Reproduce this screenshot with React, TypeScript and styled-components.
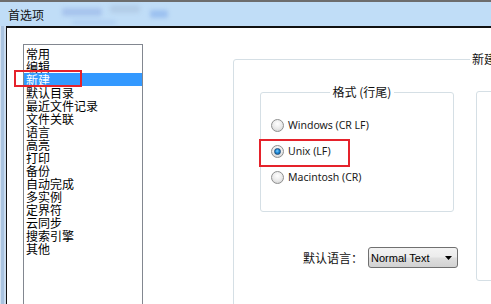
import React from 'react'
import styled, { createGlobalStyle } from 'styled-components'

const GlobalStyle = createGlobalStyle`
  html, body {
    margin: 0;
    padding: 0;
    background: #fff;
  }
  body {
    font-family: "Noto Sans CJK SC", sans-serif;
  }
`

const Window = styled.div`
  width: 491px;
  height: 304px;
  overflow: hidden;
  display: flex;
  flex-direction: column;
  background: #fff;
`

const TitleBar = styled.div`
  position: relative;
  flex: none;
  height: 24px;
  border-top: 2px solid #6d6d6d;
  background: #c0ddf7;
  display: flex;
  align-items: center;
  padding-left: 8px;
  font-size: 12px;
  color: #111;
`

// blurred glass reflections behind the caption
const Glare = styled.span<{ $x: number; $y: number; $w: number; $h: number; $c: string }>`
  position: absolute;
  left: ${({ $x }) => $x}px;
  top: ${({ $y }) => $y}px;
  width: ${({ $w }) => $w}px;
  height: ${({ $h }) => $h}px;
  background: ${({ $c }) => $c};
  filter: blur(2px);
  border-radius: 3px;
`

const Body = styled.div`
  flex: 1;
  display: flex;
  min-height: 0;
`

const FrameEdge = styled.div`
  flex: none;
  width: 6px;
  background: linear-gradient(to right, #d3e2f2 0 1px, #a9c3e0 1px 4px, #c9dcf0 4px);
`

const Client = styled.div`
  flex: 1;
  display: flex;
  align-items: flex-start;
  border-top: 2px solid #111;
  border-left: 1px solid #111;
  padding: 16px 0 0 16px;
`

const ListBox = styled.div`
  flex: none;
  width: 120px;
  height: 300px;
  box-sizing: border-box;
  border: 1px solid #828790;
  padding-top: 2px;
  background: #fff;
`

const ListItem = styled.div<{ $selected?: boolean }>`
  position: relative;
  height: 13px;
  line-height: 13px;
  font-size: 12px;
  padding-left: 2px;
  white-space: nowrap;
  color: ${({ $selected }) => ($selected ? '#fff' : '#000')};
  background: ${({ $selected }) => ($selected ? '#3399ff' : 'transparent')};
`

const Mark = styled.span<{ $l: number; $t: number; $w: number; $h: number }>`
  position: absolute;
  left: ${({ $l }) => $l}px;
  top: ${({ $t }) => $t}px;
  width: ${({ $w }) => $w}px;
  height: ${({ $h }) => $h}px;
  box-sizing: border-box;
  border: 2px solid #e5222b;
  pointer-events: none;
`

const GroupBox = styled.fieldset`
  flex: none;
  margin: 8px 0 0 90px;
  padding: 0;
  width: 320px;
  height: 300px;
  box-sizing: border-box;
  border: 1px solid #d5dfe5;
  border-radius: 3px;
  min-width: 0;
`

const Caption = styled.legend<{ $center?: boolean }>`
  font-size: 12px;
  line-height: 14px;
  padding: 0 ${({ $center }) => ($center ? 3 : 2)}px;
  margin: ${({ $center }) => ($center ? '0 auto' : '0 0 0 236px')};
  color: #111;
  white-space: nowrap;
`

const GroupInner = styled.div`
  display: flex;
  align-items: flex-start;
  padding: 19px 0 0 26px;
`

const Column = styled.div`
  display: flex;
  flex-direction: column;
`

const FormatBox = styled.fieldset`
  margin: 0;
  width: 194px;
  box-sizing: border-box;
  border: 1px solid #d5dfe5;
  border-radius: 3px;
  padding: 13px 0 21px 10px;
  min-width: 0;
`

const SideBox = styled.fieldset`
  flex: none;
  margin: 6px 0 0 22px;
  padding: 0;
  width: 100px;
  height: 190px;
  box-sizing: border-box;
  border: 1px solid #d5dfe5;
  border-radius: 3px;
`

const RadioRow = styled.div`
  position: relative;
  height: 26px;
  display: flex;
  align-items: center;
  gap: 4px;
  font-family: "Noto Sans", sans-serif;
  font-size: 10.5px;
  color: #1b1b1b;
  white-space: nowrap;
`

const Radio = styled.span<{ $checked?: boolean }>`
  position: relative;
  flex: none;
  width: 13px;
  height: 13px;
  box-sizing: border-box;
  border-radius: 50%;
  border: 1px solid #8e8f8f;
  background: radial-gradient(circle at 50% 35%, #ffffff 0%, #e9e9e9 55%, #c9c9c9 100%);
  &::after {
    content: '';
    display: ${({ $checked }) => ($checked ? 'block' : 'none')};
    position: absolute;
    left: 2px;
    top: 2px;
    width: 7px;
    height: 7px;
    box-sizing: border-box;
    border-radius: 50%;
    border: 1px solid #1c4e7c;
    background: radial-gradient(circle at 45% 40%, #7fd0ff 0%, #1f8ad8 45%, #0d5a98 100%);
  }
`

const LangRow = styled.div`
  margin: 35px -4px 0 0;
  display: flex;
  justify-content: flex-end;
  align-items: center;
  gap: 5px;
  font-size: 12px;
  color: #111;
`

const Select = styled.div`
  width: 90px;
  height: 21px;
  box-sizing: border-box;
  border: 1px solid #707070;
  border-radius: 3px;
  display: flex;
  align-items: center;
  justify-content: space-between;
  padding: 0 5px 0 2px;
  background: linear-gradient(#f3f3f3 0%, #ececec 45%, #dedede 55%, #d2d2d2 100%);
  font-family: "Liberation Sans", sans-serif;
  font-size: 11px;
  color: #000;
`

const Arrow = () => (
  <svg width="7" height="4" viewBox="0 0 7 4">
    <polygon points="0,0 7,0 3.5,4" fill="#000" />
  </svg>
)

const items = ['常用', '编辑', '新建', '默认目录', '最近文件记录', '文件关联', '语言', '高亮', '打印', '备份', '自动完成', '多实例', '定界符', '云同步', '搜索引擎', '其他']

const endings = [
  { label: 'Windows (CR LF)' },
  { label: 'Unix (LF)', checked: true },
  { label: 'Macintosh (CR)' },
]

export default function App() {
  return (
    <>
      <GlobalStyle />
      <Window>
        <TitleBar>
          <Glare $x={62} $y={6} $w={40} $h={8} $c="rgba(120,150,220,0.35)" />
          <Glare $x={110} $y={3} $w={30} $h={8} $c="rgba(150,170,200,0.3)" />
          <Glare $x={150} $y={8} $w={18} $h={8} $c="rgba(90,140,230,0.35)" />
          <Glare $x={72} $y={19} $w={44} $h={3} $c="rgba(120,160,230,0.3)" />
          首选项
        </TitleBar>
        <Body>
          <FrameEdge />
          <Client>
            <ListBox>
              {items.map((name) => (
                <ListItem key={name} $selected={name === '新建'}>
                  {name}
                  {name === '新建' && <Mark $l={-10} $t={-3} $w={68} $h={17} />}
                </ListItem>
              ))}
            </ListBox>
            <GroupBox>
              <Caption>新建</Caption>
              <GroupInner>
                <Column>
                  <FormatBox>
                    <Caption $center>格式 (行尾)</Caption>
                    {endings.map((e) => (
                      <RadioRow key={e.label}>
                        <Radio $checked={e.checked} />
                        {e.label}
                        {e.checked && <Mark $l={-12} $t={1} $w={91} $h={28} />}
                      </RadioRow>
                    ))}
                  </FormatBox>
                  <LangRow>
                    默认语言：
                    <Select>
                      Normal Text
                      <Arrow />
                    </Select>
                  </LangRow>
                </Column>
                <SideBox />
              </GroupInner>
            </GroupBox>
          </Client>
        </Body>
      </Window>
    </>
  )
}
